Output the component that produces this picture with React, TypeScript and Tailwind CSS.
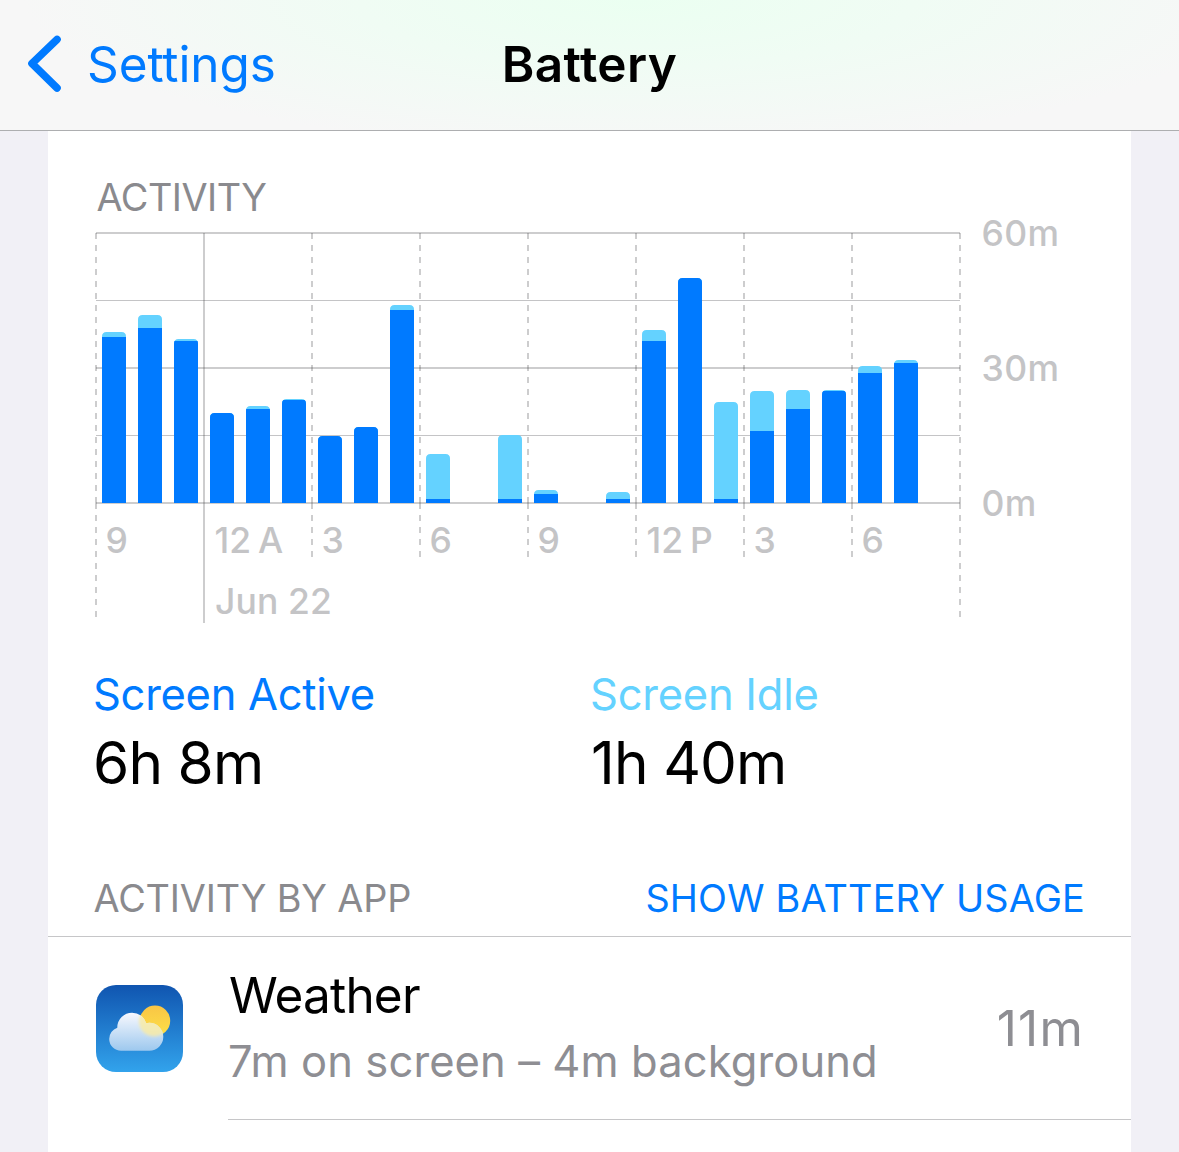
interface HourBar {
  slot: number
  active: number
  idle: number
}

// Heights are in chart units, the plot is 270 units tall for 60 minutes
const bars: HourBar[] = [
  { slot: 0, active: 166, idle: 5 },
  { slot: 1, active: 175, idle: 13 },
  { slot: 2, active: 162, idle: 2 },
  { slot: 3, active: 90, idle: 0 },
  { slot: 4, active: 94, idle: 3 },
  { slot: 5, active: 103, idle: 1 },
  { slot: 6, active: 67, idle: 0 },
  { slot: 7, active: 76, idle: 0 },
  { slot: 8, active: 193, idle: 5 },
  { slot: 9, active: 4, idle: 45 },
  { slot: 11, active: 4, idle: 64 },
  { slot: 12, active: 9, idle: 4 },
  { slot: 14, active: 4, idle: 7 },
  { slot: 15, active: 162, idle: 11 },
  { slot: 16, active: 225, idle: 0 },
  { slot: 17, active: 4, idle: 97 },
  { slot: 18, active: 72, idle: 40 },
  { slot: 19, active: 94, idle: 19 },
  { slot: 20, active: 112, idle: 1 },
  { slot: 21, active: 130, idle: 7 },
  { slot: 22, active: 140, idle: 3 },
]

const hourLabels = [
  { x: 57.5, text: "9" },
  { x: 273.5, text: "3" },
  { x: 381.5, text: "6" },
  { x: 489.5, text: "9" },
  { x: 705.5, text: "3" },
  { x: 813.5, text: "6" },
]

const BASE = 294

function Bar({ slot, active, idle }: HourBar) {
  const x = 54 + slot * 36
  const top = BASE - active - idle
  const r = 4.5
  const id = `bar-${slot}`

  return (
    <g>
      <clipPath id={id}>
        <path d={`M${x} ${BASE}V${top + r}q0 ${-r} ${r} ${-r}h${24 - 2 * r}q${r} 0 ${r} ${r}V${BASE}z`} />
      </clipPath>
      <g clipPath={`url(#${id})`}>
        <rect x={x} y={top} width="24" height={idle + active} fill="#64d2ff" />
        <rect x={x} y={BASE - active} width="24" height={active} fill="#007aff" />
      </g>
    </g>
  )
}

function ActivityChart() {
  return (
    <svg className="-mt-[10px] block h-[420px] w-full overflow-visible" viewBox="0 0 1083 420">
      <g stroke="#3c3c43" strokeOpacity="0.26" strokeWidth="2">
        <path d="M48 24H912M48 159H912M48 294H912" />
        <path d="M48 91.5H912M48 226.5H912" strokeWidth="1" strokeOpacity="0.3" />
        <path d="M156 24V414" />
        {[48, 264, 372, 480, 588, 696, 804, 912].map((x) => (
          <g key={x} strokeDasharray="6 6">
            <path d={`M${x} 24V294`} />
            <path d={x === 48 || x === 912 ? `M${x} 294V408` : `M${x} 294V348`} />
          </g>
        ))}
      </g>

      {bars.map((bar) => (
        <Bar key={bar.slot} {...bar} />
      ))}

      <g className="text-[35.5px] font-medium" fill="#c4c4c6">
        {hourLabels.map((label) => (
          <text key={label.x} x={label.x} y="344">
            {label.text}
          </text>
        ))}
        <text x="166.5" y="344">12</text>
        <text x="210" y="344">A</text>
        <text x="598.5" y="344">12</text>
        <text x="642" y="344">P</text>
        <text x="167" y="405" className="tracking-[0.1px]">Jun 22</text>
        <text x="933.5" y="37" className="tracking-[0.4px]">60m</text>
        <text x="933.5" y="172" className="tracking-[0.4px]">30m</text>
        <text x="933.5" y="307" className="tracking-[0.4px]">0m</text>
      </g>
    </svg>
  )
}

function WeatherIcon() {
  return (
    <svg className="size-[87px]" viewBox="0 0 87 87">
      <defs>
        <linearGradient id="sky" x1="0" y1="0" x2="0" y2="1">
          <stop offset="0" stopColor="#1055b0" />
          <stop offset="1" stopColor="#32a3ec" />
        </linearGradient>
        <linearGradient id="sun" x1="0" y1="0" x2="0" y2="1">
          <stop offset="0" stopColor="#f9c545" />
          <stop offset="1" stopColor="#fde047" />
        </linearGradient>
        <linearGradient id="cloud" gradientUnits="userSpaceOnUse" x1="0" y1="28" x2="0" y2="66">
          <stop offset="0" stopColor="#f7f8fe" />
          <stop offset="1" stopColor="#9dc8ee" />
        </linearGradient>
        <clipPath id="cloud-shape">
          <circle cx="25" cy="54" r="11.8" />
          <circle cx="36.1" cy="42.5" r="14.8" />
          <circle cx="53.3" cy="51.8" r="14" />
          <rect x="25" y="48" width="28.3" height="17.8" />
        </clipPath>
        <filter id="soften" x="-30%" y="-30%" width="160%" height="160%">
          <feGaussianBlur stdDeviation="1.8" />
        </filter>
      </defs>
      <rect width="87" height="87" rx="20" fill="url(#sky)" />
      <circle cx="59" cy="35.8" r="15.2" fill="url(#sun)" />
      <g clipPath="url(#cloud-shape)">
        <rect x="12" y="26" width="58" height="42" fill="url(#cloud)" />
        <circle cx="58" cy="36.5" r="15" fill="#f8eba6" fillOpacity="0.85" filter="url(#soften)" />
      </g>
    </svg>
  )
}

export default function App() {
  return (
    <div className="flex h-[1152px] w-[1179px] flex-col overflow-hidden bg-[#f1f0f6] font-['Inter',sans-serif] text-black">
      <header className="grid h-[131px] shrink-0 grid-cols-3 items-center border-b border-[#adaeb0] bg-[#f7f7f7] bg-[radial-gradient(ellipse_52%_115%_at_54%_0%,#ebfff1_0%,#f0fcf4_45%,#f7f7f7_100%)] pb-[2px]">
        <button className="flex items-center pl-[24px] text-[49.5px] tracking-[-0.1px] text-[#007aff]">
          <svg className="h-[64px] w-[40px]" viewBox="0 0 40 64" fill="none">
            <path
              d="M33 7.5L8 31.5L33 56"
              stroke="#007aff"
              strokeWidth="7.6"
              strokeLinecap="round"
              strokeLinejoin="round"
            />
          </svg>
          <span className="ml-[23px] leading-[60px]">Settings</span>
        </button>
        <h1 className="text-center text-[49.5px] leading-[60px] font-semibold tracking-[0.4px]">Battery</h1>
      </header>

      <main className="mx-[48px] flex-1 bg-white pt-[44px]">
        <h2 className="pl-[48.5px] text-[37.8px] leading-[44px] tracking-[-0.5px] text-[#8a8a8e]">ACTIVITY</h2>
        <ActivityChart />

        <div className="flex pt-[37px] pl-[45px]">
          <div className="w-[497px]">
            <p className="text-[43.5px] leading-[56px] tracking-[-0.3px] text-[#007aff]">Screen Active</p>
            <p className="mt-[5px] text-[58.5px] leading-[72px] tracking-[-0.9px]">6h 8m</p>
          </div>
          <div>
            <p className="text-[43.5px] leading-[56px] tracking-[-0.25px] text-[#64d2ff]">Screen Idle</p>
            <p className="mt-[5px] pl-px text-[58.5px] leading-[72px] tracking-[-0.9px]">1h 40m</p>
          </div>
        </div>

        <div className="mt-[77px] flex h-[61px] justify-between border-b border-[#c6c6c8] pr-[46px] pl-[45.5px] text-[37.8px] leading-[44px]">
          <h2 className="tracking-[-0.15px] text-[#8a8a8e]">ACTIVITY BY APP</h2>
          <button className="h-[44px] tracking-[0.2px] text-[#007aff]">SHOW BATTERY USAGE</button>
        </div>

        <div className="flex pl-[48px]">
          <div className="pt-[48px]">
            <WeatherIcon />
          </div>
          <div className="ml-[45px] flex h-[183px] flex-1 items-start justify-between border-b border-[#c6c6c8] pr-[47px]">
            <div className="pt-[28px]">
              <p className="pl-px text-[49.5px] leading-[60px] tracking-[-0.8px]">Weather</p>
              <p className="mt-[8px] text-[43.5px] leading-[56px] tracking-[0.1px] text-[#8e8e93]">7m on screen – 4m background</p>
            </div>
            <p className="pt-[61px] text-[49.5px] leading-[60px] tracking-[1.2px] text-[#8e8e93]">11m</p>
          </div>
        </div>
      </main>
    </div>
  )
}
